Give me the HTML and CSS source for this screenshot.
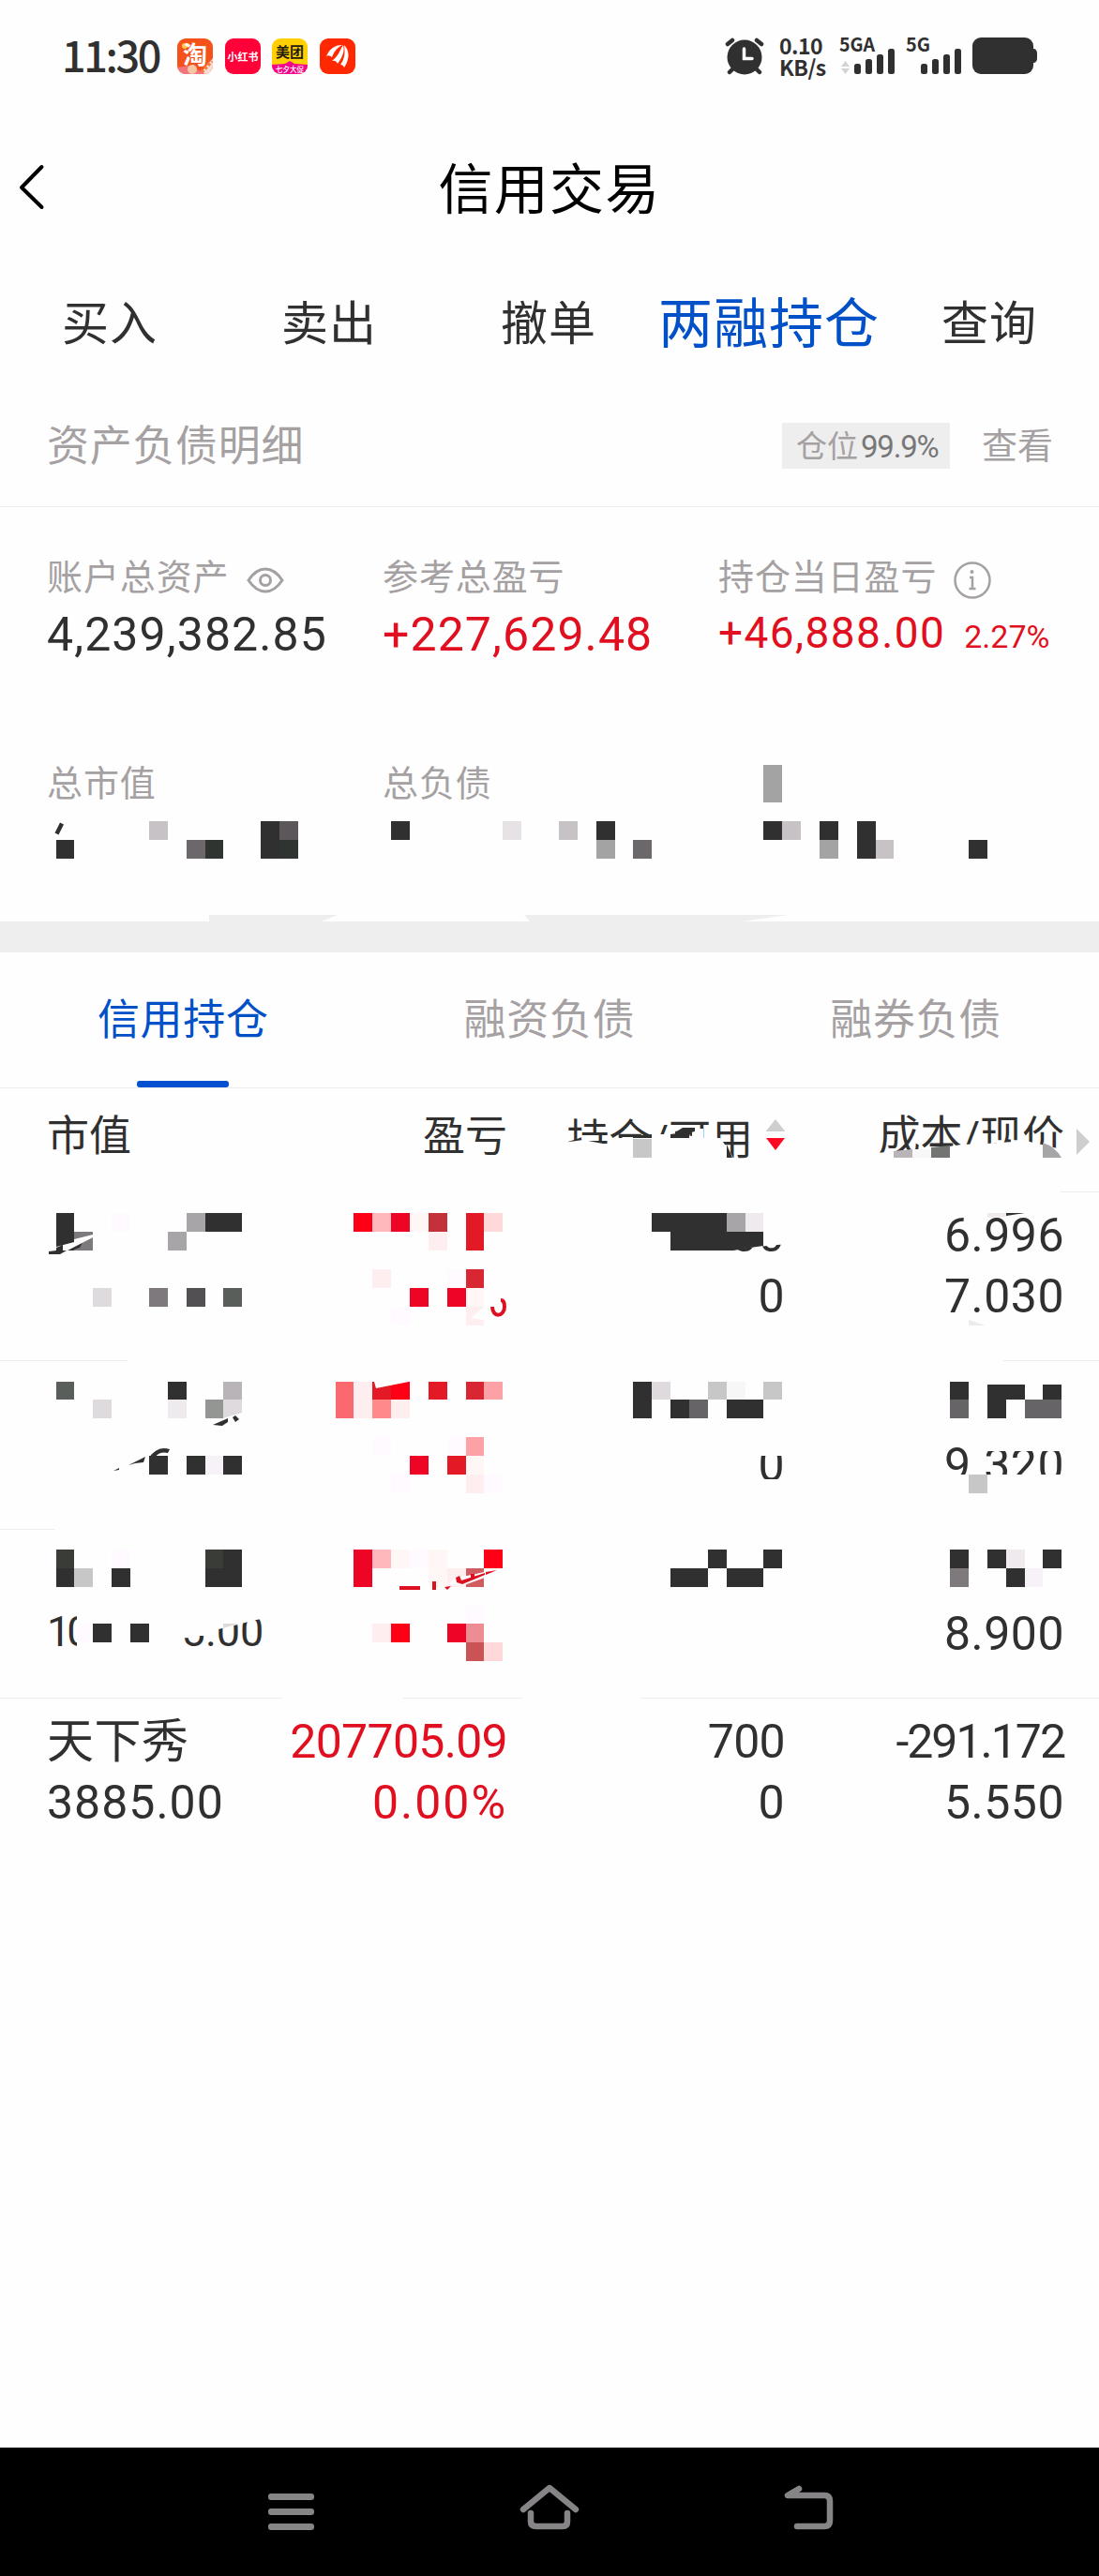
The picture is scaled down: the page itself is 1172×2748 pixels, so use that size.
FILE: index.html
```html
<!DOCTYPE html>
<html lang="zh-CN">
<head>
<meta charset="utf-8">
<title>信用交易</title>
<link rel="stylesheet" href="styles.css">
</head>
<body>
<div class="phone">
  <header class="status">
    <span class="clock">11:30</span>
    <svg class="apps" width="190" height="38" viewBox="0 0 190 38">
      <defs><clipPath id="app"><rect width="38" height="38" rx="9"/></clipPath></defs>
      <g clip-path="url(#app)">
        <rect width="38" height="38" fill="#f4511b"/>
        <path d="M24 38 38 21V38Z" fill="#f7dfd5"/><path d="M0 31 14 29 30 38H0Z" fill="#f4747c"/>
        <circle cx="16" cy="33" r="5" fill="#f3c9a5"/><path d="M26 36 37 24" stroke="#f37b42" stroke-width="4" stroke-dasharray="3 2"/>
        <circle cx="8" cy="8" r="3" fill="#ffc94a"/>
      </g>
      <text x="19" y="27" class="app-text" font-size="26" fill="#fff">淘</text>
      <g transform="translate(51)"><rect width="38" height="38" rx="9" fill="#ff0038"/><text x="19" y="23.500" class="app-text" font-size="11" fill="#fff">小红书</text></g>
      <g transform="translate(101)"><g clip-path="url(#app)"><rect width="38" height="38" fill="#ffcf00"/><path d="M0 28 14 27 19 24 24 27 38 28V38H0Z" fill="#f2078c"/></g><text x="19" y="20" class="app-text" font-size="15" fill="#221b10">美团</text><text x="19" y="35.500" class="app-text thin" font-size="7.500" fill="#fff">七夕大促</text></g>
      <g transform="translate(152)"><rect width="38" height="38" rx="9" fill="#ff2800"/><path d="M7 19C11 10 17 7 24 7C17 11 15 15 13 20Q10 17 7 19ZM13 24C20 19 21 13 25 7C27 14 24 20 19 27Q17 23 13 24ZM22 28C27 21 27 15 26 7C32 13 32 22 26 31Q25 28 22 28Z" fill="#fff"/></g>
    </svg>
    <div class="status-right">
      <svg class="alarm" width="42" height="40" viewBox="0 0 42 40"><g stroke="#303030" stroke-width="4.500" stroke-linecap="round"><path d="M3 7 8 3M39 7 34 3M8 34 5 37M34 34 37 37"/></g><circle cx="21" cy="21" r="18.500" fill="#303030"/><path d="M20.500 12V22.500H29" fill="none" stroke="#fff" stroke-width="3.500" stroke-linecap="round"/></svg>
      <div class="speed"><span>0.10</span><span>KB/s</span></div>
      <svg class="signal" width="60" height="39" viewBox="0 0 60 39"><text x="0" y="14.500" class="net" textLength="38" lengthAdjust="spacingAndGlyphs">5GA</text><path d="M2 31 6.500 25 11 31ZM2 33H11L6.500 39Z" fill="#d3d3d3"/><g fill="#303030"><rect x="16" y="28" width="7" height="11" rx="2.500"/><rect x="28" y="23" width="7" height="16" rx="2.500"/><rect x="40" y="18" width="7" height="21" rx="2.500"/><rect x="52" y="12" width="7" height="27" rx="2.500"/></g></svg>
      <svg class="signal signal-two" width="60" height="39" viewBox="0 0 60 39"><text x="0" y="14.500" class="net" textLength="26" lengthAdjust="spacingAndGlyphs">5G</text><g fill="#303030"><rect x="16" y="28" width="7" height="11" rx="2.500"/><rect x="28" y="23" width="7" height="16" rx="2.500"/><rect x="40" y="18" width="7" height="21" rx="2.500"/><rect x="52" y="12" width="7" height="27" rx="2.500"/></g></svg>
      <svg class="battery" width="70" height="39" viewBox="0 0 70 39"><rect width="65" height="39" rx="9" fill="#303030"/><path d="M64 12H66Q69 13 69 17V22Q69 26 66 27H64Z" fill="#303030"/></svg>
    </div>
  </header>

  <div class="titlebar">
    <svg class="back" width="28" height="50" viewBox="0 0 28 50"><path d="M24.500 3 3 25 24.500 46" fill="none" stroke="#000" stroke-width="4" stroke-linecap="round" stroke-linejoin="round"/></svg>
    <h1>信用交易</h1>
  </div>

  <nav class="tabs"><span>买入</span><span>卖出</span><span>撤单</span><span class="on">两融持仓</span><span>查询</span></nav>

  <div class="detail"><span class="detail-name">资产负债明细</span><span class="tag">仓位<b>99.9%</b></span><span class="look">查看</span></div>

  <section class="summary">
    <div class="cell">
      <div class="label"><span>账户总资产</span><svg class="eye" width="40" height="28" viewBox="0 0 40 28"><path d="M2 14Q10 2 20 2T38 14Q30 26 20 26T2 14Z" fill="none" stroke="#a5a1a3" stroke-width="3"/><circle cx="20" cy="14" r="5.500" fill="none" stroke="#a5a1a3" stroke-width="3"/></svg></div>
      <div class="value">4,239,382.85</div>
    </div>
    <div class="cell">
      <div class="label"><span>参考总盈亏</span></div>
      <div class="value red">+227,629.48</div>
    </div>
    <div class="cell">
      <div class="label"><span>持仓当日盈亏</span><svg class="info" width="40" height="40" viewBox="0 0 40 40"><circle cx="20" cy="20" r="18.500" fill="none" stroke="#a5a1a3" stroke-width="2.500"/><path d="M17 17H20V29M16.500 29H23.500" fill="none" stroke="#a5a1a3" stroke-width="2.500"/><circle cx="19.500" cy="11" r="2" fill="#a5a1a3"/></svg></div>
      <div class="value red day">+46,888.00<small>2.27%</small></div>
    </div>
    <div class="cell low"><div class="label"><span>总市值</span></div></div>
    <div class="cell low"><div class="label"><span>总负债</span></div></div>
    <svg class="mosaic" width="1172" height="476" viewBox="0 541 1172 476">
      <path d="M66 878.500 60.500 889.500" stroke="#303030" stroke-width="4.500"/>
      <path fill="#303030" d="M278 876h20v40h-20zM417 876h20v20h-20zM636 876h20v20h-20zM814 876h20v20h-20zM874 876h20v20h-20zM914 876h20v40h-20zM60 896h19v20h-19zM1033 896h20v20h-20z"/>
      <path fill="#303430" d="M219 896h19v20h-19zM298 896h20v20h-20z"/>
      <path fill="#c6c2c5" d="M159 876h20v20h-20zM596 876h20v20h-20zM834 876h20v20h-20zM934 896h19v20h-19z"/>
      <path fill="#e6e2e6" d="M536 876h20v20h-20z"/><path fill="#5b575b" d="M298 876h20v20h-20z"/>
      <path fill="#6b676b" d="M199 896h20v20h-20zM675 896h20v20h-20z"/>
      <path fill="#a4a3a4" d="M636 896h20v20h-20zM874 896h20v20h-20zM814 816h20v40h-20z"/>
      <path fill="#eee" d="M223 976H360L340 984H223ZM559 976H840L785 984H566Z"/>
    </svg>
  </section>

  <nav class="subtabs"><span class="on">信用持仓</span><span>融资负债</span><span>融券负债</span></nav>

  <section class="holdings">
    <div class="head"><span>市值</span><span>盈亏</span><span class="sortable">持仓/可用<svg width="20" height="34" viewBox="0 0 20 34"><path d="M10 0 20.500 13H-.500Z" fill="#cecece"/><path d="M0 20H20L10 33Z" fill="#ff0824"/></svg></span><span>成本/现价</span><svg class="more" width="14" height="28" viewBox="0 0 14 28"><path d="M0 0 14 14 0 28Z" fill="#cecece"/></svg></div>
    <div class="row"><span></span><span></span><span>00</span><span>6.996</span><span></span><span></span><span>0</span><span>7.030</span></div>
    <div class="row"><span></span><span></span><span></span><span></span><span></span><span></span><span>0</span><span>9.320</span></div>
    <div class="row"><span></span><span></span><span></span><span></span><span class="partial"><i>10</i><i>5.00</i></span><span></span><span></span><span>8.900</span></div>
    <div class="row last"><span class="name">天下秀</span><span class="red tight">207705.09</span><span class="tight">700</span><span class="tighter">-291.172</span><span class="wide">3885.00</span><span class="red wider">0.00%</span><span>0</span><span>5.550</span></div>
    <svg class="mosaic" width="1172" height="660" viewBox="0 1161 1172 660">
      <path fill="#fefefe" d="M600 1219 622 1216 648 1221 658 1217V1214H676L700 1210H730L746 1214H768L778 1228 786 1243H600ZM738 1213V1204H750V1215Z"/>
      <path fill="#fefefe" d="M935 1230 1012 1223 1025 1221 1052 1220 1094 1217 1132 1226V1245H935ZM0 1270H1131V1273H0ZM136 1450H1070V1453H136ZM58 1630H1172V1633H58ZM301 1810H430V1813H301ZM557 1810H683V1813H557ZM765 1285H840V1327L765 1334ZM805 1535H838V1553H805ZM805 1578H838V1585H805ZM1000 1573H1140V1590H1000ZM1050 1535H1140V1548H1050ZM82 1715h18v45h-18zM190 1715H285L278 1727 233 1738 218 1745H190Z"/>
      <path fill="#303030" d="M695 1294h80v20h-80zM715 1314h99v15L800 1331 782 1334H715zM60 1294h19v40h-19zM219 1294h39v20h-39zM1073 1294h20l-20 3zM52 1335 60 1334 88 1322 99 1318 64 1338H52ZM715 1210 735 1207V1214H715ZM720 1208 728 1203H741V1207L720 1212ZM675 1212 695 1210V1214H675ZM775 1221 781 1235H775Z"/>
      <path fill="#303030" d="M179 1474h20v19h-20zM159 1553h20v20h-20zM199 1553h20v20h-20zM238 1553h20v20h-20zM675 1474h20v39h-20zM715 1493h20v20h-20zM775 1493h39v20h-39zM1013 1474h20v19h-20zM1053 1477h40v16h-20v20h-20zM1112 1477h20v16h-20z"/>
      <path fill="#393c37" d="M60 1653h19v20h-19zM219 1653h19v20h-19z"/>
      <path fill="#303030" d="M238 1653h20v20h-20zM60 1673h19v20h-19zM119 1673h20v20h-20zM219 1673h39v20h-39zM99 1732h20v20h-20zM139 1732h20v20h-20zM755 1653h20v20h-20zM814 1653h20v20h-20zM715 1673h40v20h-40zM775 1673h39v20h-39zM1013 1653h20v20h-20zM1053 1653h20v20h-20zM1112 1653h20v20h-20zM1073 1673h20v20h-20z"/>
      <path fill="#7d797d" d="M79 1314h20v20h-20zM159 1374h20v20h-20zM1013 1673h20v20h-20z"/>
      <path fill="#303030" d="M79 1326 91 1320 85 1331 79 1333Z"/>
      <path fill="#fefefe" d="M60 1330 79 1325V1322L99 1317V1320L72 1334H67V1328L60 1331Z"/>
      <path fill="#a7a5a7" d="M199 1294h20v20h-20zM179 1314h20v20h-20zM775 1294h20v20h-20z"/>
      <path fill="#a7a5a7" d="M1112 1219Q1125 1223 1132 1235H1112Z"/>
      <path fill="#c8c7c8" d="M675 1215h20v20h-20zM755 1474h20v19h-20zM814 1474h20v19h-20zM79 1673h20v20h-20zM1033 1573h20v20h-20z"/>
      <path fill="#b8b4b8" d="M953 1228 973 1226V1235H953ZM238 1474h20v19h-20z"/><path fill="#727572" d="M993 1224 1013 1222V1235H993Z"/><path fill="#f7f7f7" d="M973 1226h20v9h-20zM775 1474h20v19h-20z"/>
      <path fill="#dedade" d="M99 1374h20v20h-20zM99 1493h20v20h-20zM695 1474h20v19h-20zM238 1493h20v14l-20 6zM238 1732h16l-16 5z"/>
      <path fill="#525052" d="M199 1374h20v20h-20z"/><path fill="#5a5e5a" d="M238 1374h20v20h-20zM60 1474h19v19h-19z"/>
      <path fill="#eeeaee" d="M795 1294h19v20h-19zM1053 1294h20v4l-20 1zM179 1493h20v20h-20zM1073 1653h20v20h-20zM1033 1408 1051 1414H1033Z"/>
      <path fill="#949694" d="M219 1493h19v20h-19z"/><path fill="#676467" d="M735 1493h20v20h-20zM1013 1493h20v20h-20zM1093 1493h39v20h-39z"/>
      <path fill="#f7f2f8" d="M219 1553h19v20h-19zM1093 1673h19v20h-19z"/>
      <path fill="#fffaff" d="M119 1294h20v20h-20zM119 1653h20v20h-20zM82 1732h17v20h-17z"/>
      <path fill="#303030" d="M227 1520 243 1513V1517L237 1521ZM248 1512 251 1510 255 1514 251 1517ZM121 1569 127 1566V1568ZM137 1563 147 1558 155 1554 153 1560 144 1561ZM159 1555Q168 1542 181 1546L179 1550Q170 1548 165 1555Z"/>

      <path fill="#fd0015" d="M377 1294h20v20h-20zM417 1474h20v19h-20zM516 1653h20v20h-20zM417 1732h20v20h-20z"/>
      <path fill="#ee0424" d="M417 1294h20v20h-20zM437 1374h20v20h-20zM477 1374h20v20h-20zM437 1553h20v20h-20zM377 1653h20v40h-20zM477 1732h20v20h-20z"/>
      <path fill="#e31a25" d="M497 1294h19v40h-19zM397 1474h20v19h-20zM457 1474h20v19h-20zM477 1553h20v20h-20z"/>
      <path fill="#d82632" d="M497 1354h19v20h-19zM497 1474h19v19h-19z"/><path fill="#c3323b" d="M457 1294h20v20h-20z"/>
      <path fill="#ffb8bc" d="M397 1294h20v20h-20zM397 1653h20v20h-20z"/><path fill="#ffd8da" d="M516 1294h20v20h-20zM516 1752h20v20h-20z"/>
      <path fill="#fa696f" d="M358 1474h19v39h-19z"/><path fill="#ff8a8c" d="M397 1493h20v20h-20z"/><path fill="#fca2a6" d="M516 1474h20v19h-20zM497 1533h19v20h-19z"/>
      <path fill="#ffeeef" d="M457 1314h20v20h-20zM397 1354h20v20h-20zM497 1394h19l-14 12 14 2v6h-19zM377 1474h20v39h-20zM417 1493h20v20h-20zM497 1573h19v20h-19zM477 1673h20v20h-20zM397 1732h20v20h-20z"/>
      <path fill="#fff6f6" d="M437 1294h20v20h-20zM497 1374h19v20h-19zM497 1553h19v20h-19zM417 1653h20v20h-20zM457 1653h20v40h-20z"/>
      <path fill="#fffaff" d="M477 1354h20v20h-20zM417 1394h20v20h-20zM397 1533h20v20h-20zM477 1533h20v20h-20zM417 1573h20v20h-20zM516 1573h20v20h-20zM437 1653h20v20h-20zM497 1713h19v20h-19z"/>
      <path fill="#d05c60" d="M497 1673h19v20h-19z"/><path fill="#ca5356" d="M497 1752h19v20h-19z"/><path fill="#ee8c94" d="M497 1732h19v20h-19z"/>
      <path fill="#fefefe" d="M399 1474H436L401 1481ZM477 1690 488 1683 536 1673V1676L495 1691Z"/>
      <path fill="#dc1020" d="M426 1692H448V1696H426ZM461 1687H465V1696H461ZM474 1693 481 1692 477 1696ZM486 1683 490 1681 492 1686 517 1678V1680L493 1690 487 1688ZM502 1679h4v6h-4zM518 1677 530 1675 518 1680ZM338 1832H345L341 1834Z"/>
      <path d="M525 1394C525 1406 538 1405 538 1394Q538 1387 534 1387" fill="none" stroke="#dc1020" stroke-width="4"/>
    </svg>
  </section>

  <footer class="sysnav">
    <svg width="50" height="40" viewBox="0 0 50 40"><g fill="#868486"><rect width="49" height="7" rx="3"/><rect y="16" width="49" height="7" rx="3"/><rect y="32" width="49" height="7" rx="3"/></g></svg>
    <svg class="home" width="64" height="50" viewBox="0 0 64 50" fill="none" stroke="#868486" stroke-width="6.500" stroke-linecap="round" stroke-linejoin="round"><path d="M4 27 32 4 60 27M12 31V40Q12 45 18 45H46Q51 45 51 40V31"/></svg>
    <svg class="return" width="54" height="50" viewBox="0 0 54 50" fill="none" stroke="#868486" stroke-width="6.500" stroke-linecap="round" stroke-linejoin="round"><path d="M16 5 4 12H43Q49 12 49 18V39Q49 45 43 45H14"/></svg>
  </footer>
</div>
</body>
</html>
```
FILE: styles.css
```css
* { box-sizing: border-box; }
body { margin: 0; background: #fefefe; color: #303030; font-family: Roboto, "Noto Sans CJK SC", sans-serif; }
svg { display: block; flex: none; }
.phone { width: 1172px; height: 2748px; display: flex; flex-direction: column; background: #fefefe; }

.status { height: 140px; display: flex; padding: 40px 65px 0 66px; }
.clock { width: 123px; font-family: "Noto Sans CJK SC", sans-serif; font-size: 45px; font-weight: 500; line-height: 40px; letter-spacing: -2.4px; margin-top: -2px; }
.apps { margin-top: 1px; overflow: visible; }
.app-text { font-family: "Noto Sans CJK SC", sans-serif; font-weight: 700; text-anchor: middle; }
.app-text.thin { font-weight: 500; }
.status-right { display: flex; margin-left: auto; }
.speed { display: flex; flex-direction: column; width: 45px; margin: -3px 19px 0 16px; font: 700 23px/23px "Noto Sans CJK SC", sans-serif; letter-spacing: -0.5px; white-space: nowrap; }
.signal { overflow: visible; }
.net { font: 700 20px "Noto Sans CJK SC", sans-serif; fill: #303030; }
.signal-two { margin-left: 11px; }
.battery { margin-left: 11px; }

.titlebar { height: 124px; display: grid; grid-template-columns: 200px 1fr 200px; align-items: center; }
.back { margin-left: 20px; margin-top: -6px; }
h1 { margin: 0; font-size: 58px; font-weight: 400; color: #000; letter-spacing: 1.3px; text-align: center; line-height: 126px; }

.tabs { display: grid; grid-template-columns: repeat(5, 1fr); height: 160px; text-align: center; font-size: 50px; line-height: 164px; letter-spacing: 1px; white-space: nowrap; }
.tabs .on { font-size: 58px; color: #0050c8; }

.detail { height: 117px; border-bottom: 1px solid #ececec; display: flex; align-items: flex-start; padding: 27px 49px 0 50px; color: #a5a1a3; }
.detail-name { font-size: 45px; line-height: 51px; letter-spacing: .7px; margin-right: auto; }
.tag { width: 179px; height: 49px; padding-left: 15px; background: #eee; font-size: 33px; line-height: 51px; white-space: nowrap; }
.tag b { font-weight: 400; font-size: 33px; color: #777; margin-left: 3px; letter-spacing: -1.2px; }
.look { font-size: 38px; line-height: 50px; margin-left: 34px; }

.summary { position: relative; height: 475px; display: grid; grid-template-columns: 358px 358px 1fr; grid-template-rows: 220px 1fr; padding: 50px 0 0 50px; border-bottom: 33px solid #eee; }
.label { display: flex; align-items: center; height: 50px; font-size: 38px; letter-spacing: .9px; line-height: 50px; color: #a5a1a3; }
.eye { margin: 5px 0 0 18px; }
.info { margin: 6px 0 0 18px; }
.value { font-size: 50px; line-height: 72px; letter-spacing: 1.1px; white-space: nowrap; }
.value.day { font-size: 46px; line-height: 69px; letter-spacing: 1.4px; }
.value small { font-size: 34px; letter-spacing: 0; margin-left: 20px; }
.red { color: #e01020; }
.mosaic { position: absolute; left: 0; top: 0; pointer-events: none; }

.subtabs { height: 145px; display: grid; grid-template-columns: repeat(3, 1fr); border-bottom: 1px solid #ececec; text-align: center; font-size: 45px; line-height: 146px; letter-spacing: .7px; color: #a5a1a3; }
.subtabs .on { color: #0050c8; display: flex; flex-direction: column; align-items: center; }
.subtabs .on::after { content: ""; width: 98px; height: 7px; margin-top: -9px; border-radius: 3px; background: #0050d0; flex: none; }

.holdings { position: relative; }
.head, .row { display: grid; grid-template-columns: 200px 291px 296px 298px; padding-left: 50px; border-bottom: 1px solid #ececec; text-align: right; white-space: nowrap; }
.head { height: 111px; font-size: 45px; line-height: 103px; position: relative; }
.head span:first-child, .row span:nth-child(4n+1) { text-align: left; }
.sortable { display: flex; align-items: center; justify-content: flex-end; gap: 14px; }
.sortable svg { margin-top: -10px; }
.more { position: absolute; left: 1148px; top: 43px; }
.row { height: 180px; padding-top: 14px; font-size: 50px; letter-spacing: .5px; grid-auto-rows: 65px; line-height: 65px; }
.row.last { border: 0; }
.tight { letter-spacing: -.7px; }
.tighter { letter-spacing: -2px; }
.wide { letter-spacing: 1px; }
.wider { letter-spacing: 2px; }
.partial { display: flex; gap: 101px; font-size: 45px; line-height: 60px; }
.partial i { font-style: normal; letter-spacing: 0; }
.partial i:first-child { letter-spacing: -4px; }

.sysnav { height: 137px; margin-top: auto; background: #000; display: flex; justify-content: space-between; padding: 49px 282px 0 286px; }
.home, .return { margin-top: -10px; }
```
